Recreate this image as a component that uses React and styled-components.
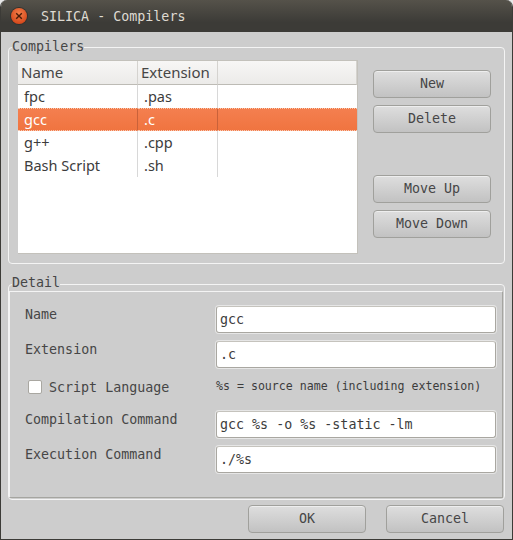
import React from 'react';
import styled, { createGlobalStyle } from 'styled-components';

const Global = createGlobalStyle`
  html, body { margin: 0; padding: 0; background: #e8e8e8; }
  * { box-sizing: border-box; }
`;
const mono = `"DejaVu Sans Mono", "Liberation Mono", monospace`;
const sans = `"Noto Sans", "Open Sans", sans-serif`;
const baseSize = '13.33px';

const Window = styled.div`
  width: 513px; height: 540px; display: flex; flex-direction: column;
  background: #cdcdcd; border: 1px solid #3c3b37; border-top: 0;
  border-radius: 7px 7px 0 0; overflow: hidden;
  font-family: ${mono}; font-size: ${baseSize}; color: #464646;
`;
const TitleBar = styled.div`
  height: 32px; flex: none; display: flex; align-items: center; padding-left: 11px; gap: 14px;
  background: linear-gradient(#55524a, #3c3b37 70%);
  color: #dfdbd2; font-size: ${baseSize}; margin: 0 -1px;
`;
const CloseBtn = styled.div`
  width: 16px; height: 16px; border-radius: 50%; flex: none; display: flex; align-items: center; justify-content: center;
  background: radial-gradient(circle at 50% 35%, #f5804a, #d6491c 75%);
  box-shadow: 0 0 0 1px #33312c;
`;
const Content = styled.div`
  flex: 1; display: flex; flex-direction: column; padding: 6px 7px 0 7px;
`;
const Group = styled.fieldset`
  margin: 0; padding: 0; min-width: 0; border: 1px solid #f4f4f4; border-radius: 4px;
`;
const Legend = styled.legend`
  margin-left: 3px; padding: ${p => p.$top}px 0 ${p => 4 - p.$top}px; font-size: ${baseSize}; line-height: 15px; color: #464646;
`;
const CompilersGroup = styled(Group)`
  height: 226px;
`;
const CompilersBody = styled.div`
  display: flex; gap: 15px; height: 194px; padding: 3px 13px 0 9px; box-sizing: content-box;
`;
const Table = styled.div`
  width: 340px; height: 194px; background: #fff; border: 1px solid #c3c1bb; border-width: 1px 1px 1px 0;
  display: grid; grid-template-columns: 120px 80px 1fr; grid-template-rows: 24px; grid-auto-rows: 23px; align-content: start;
  font-family: ${sans}; font-size: 14.5px; color: #3c3c3c; flex: none;
`;
const HeadCell = styled.div`
  height: 24px; padding: 0 0 1px 3px; display: flex; align-items: center;
  background: linear-gradient(#f7f6f5, #ecebe9); border-right: 1px solid #d5d3cf; border-bottom: 1px solid #bdbbb5;
  color: #464646; font-size: 15px;
  &:last-child { border-right: 0; }
`;
const Cell = styled.div`
  padding: 0 0 2px 6px; display: flex; align-items: center; height: 23px;
  border-right: ${p => p.$last ? '0' : `1px solid ${p.$sel ? '#c9623a' : '#d8d8d8'}`};
  background: ${p => p.$sel ? 'linear-gradient(#f47f4f, #f07440)' : '#fff'};
  color: ${p => p.$sel ? '#fff' : '#3c3c3c'};
  ${p => p.$sel ? 'border-top: 1px dotted #f9c9b2; border-bottom: 1px dotted #f9c9b2;' : ''}
`;
const ButtonCol = styled.div`
  width: 118px; flex: none; display: flex; flex-direction: column; padding-top: 10px; gap: 7px;
`;
const Btn = styled.div`
  width: 118px; height: 28px; flex: none; display: flex; align-items: center; justify-content: center;
  border: 1px solid #a0a09c; border-radius: 4px; padding-bottom: 1px;
  background: linear-gradient(#dedede, #c2c2c2);
  box-shadow: inset 0 1px 0 #eeeeee;
  font-size: ${baseSize}; color: #464646;
`;
const Gap = styled.div`height: 28px; flex: none;`;
const DetailGroup = styled(Group)`
  margin-top: 11px; height: 225px;
`;
const DetailPanel = styled.div`
  height: 207px; margin: -3px 1px 0 0; border: 1px solid #a5a5a0; border-top-color: #f4f4f4; border-left-color: #f4f4f4;
  padding: 14px 6px 0 15px; display: flex; flex-direction: column; gap: 8px;
`;
const Row = styled.div`
  height: 27px; flex: none; display: flex; align-items: flex-start;
`;
const Label = styled.div`
  width: 191px; flex: none; line-height: 15px; padding-top: 1px;
`;
const Field = styled.div`
  width: 280px; height: 27px; flex: none; background: #fff; border: 1px solid #a9a7a1; border-top-color: #c5c3bd;
  border-radius: 3px; box-shadow: 0 0 0 1px #e6e6e6; padding-left: 3px; display: flex; align-items: center;
  color: #3c3c3c;
`;
const CheckWrap = styled.div`
  width: 191px; flex: none; display: flex; align-items: center; height: 22px; padding-left: 3px; gap: 7px;
`;
const Check = styled.div`
  width: 14px; height: 14px; background: #fff; border: 1px solid #a9a7a1; border-radius: 2px; flex: none;
`;
const Hint = styled.div`
  font-size: 11.6px; line-height: 21px; white-space: nowrap; color: #3c3c3c;
`;
const Footer = styled.div`
  display: flex; justify-content: flex-end; gap: 20px; padding-top: 5px; margin-right: -7px; padding-right: 8px;
`;

const rows = [['fpc', '.pas'], ['gcc', '.c'], ['g++', '.cpp'], ['Bash Script', '.sh']];

export default function App() {
  return (
    <>
      <Global />
      <Window>
        <TitleBar>
          <CloseBtn>
            <svg width="8" height="8" viewBox="0 0 8 8"><path d="M1.2 1.2 6.8 6.8M6.8 1.2 1.2 6.8" stroke="#4a1c08" strokeWidth="1.4" /></svg>
          </CloseBtn>
          <span>SILICA - Compilers</span>
        </TitleBar>
        <Content>
          <CompilersGroup>
            <Legend $top={1}>Compilers</Legend>
            <CompilersBody>
              <Table>
                <HeadCell>Name</HeadCell>
                <HeadCell>Extension</HeadCell>
                <HeadCell />
                {rows.map((r, i) => (
                  <React.Fragment key={r[0]}>
                    <Cell $sel={i === 1}>{r[0]}</Cell>
                    <Cell $sel={i === 1}>{r[1]}</Cell>
                    <Cell $last $sel={i === 1} />
                  </React.Fragment>
                ))}
              </Table>
              <ButtonCol>
                <Btn>New</Btn>
                <Btn>Delete</Btn>
                <Gap />
                <Btn>Move Up</Btn>
                <Btn>Move Down</Btn>
              </ButtonCol>
            </CompilersBody>
          </CompilersGroup>
          <DetailGroup>
            <Legend $top={0}>Detail</Legend>
            <DetailPanel>
              <Row><Label>Name</Label><Field>gcc</Field></Row>
              <Row><Label>Extension</Label><Field>.c</Field></Row>
              <Row>
                <CheckWrap><Check /><span>Script Language</span></CheckWrap>
                <Hint>%s = source name (including extension)</Hint>
              </Row>
              <Row><Label>Compilation Command</Label><Field>gcc %s -o %s -static -lm</Field></Row>
              <Row><Label>Execution Command</Label><Field>./%s</Field></Row>
            </DetailPanel>
          </DetailGroup>
          <Footer>
            <Btn>OK</Btn>
            <Btn>Cancel</Btn>
          </Footer>
        </Content>
      </Window>
    </>
  );
}
